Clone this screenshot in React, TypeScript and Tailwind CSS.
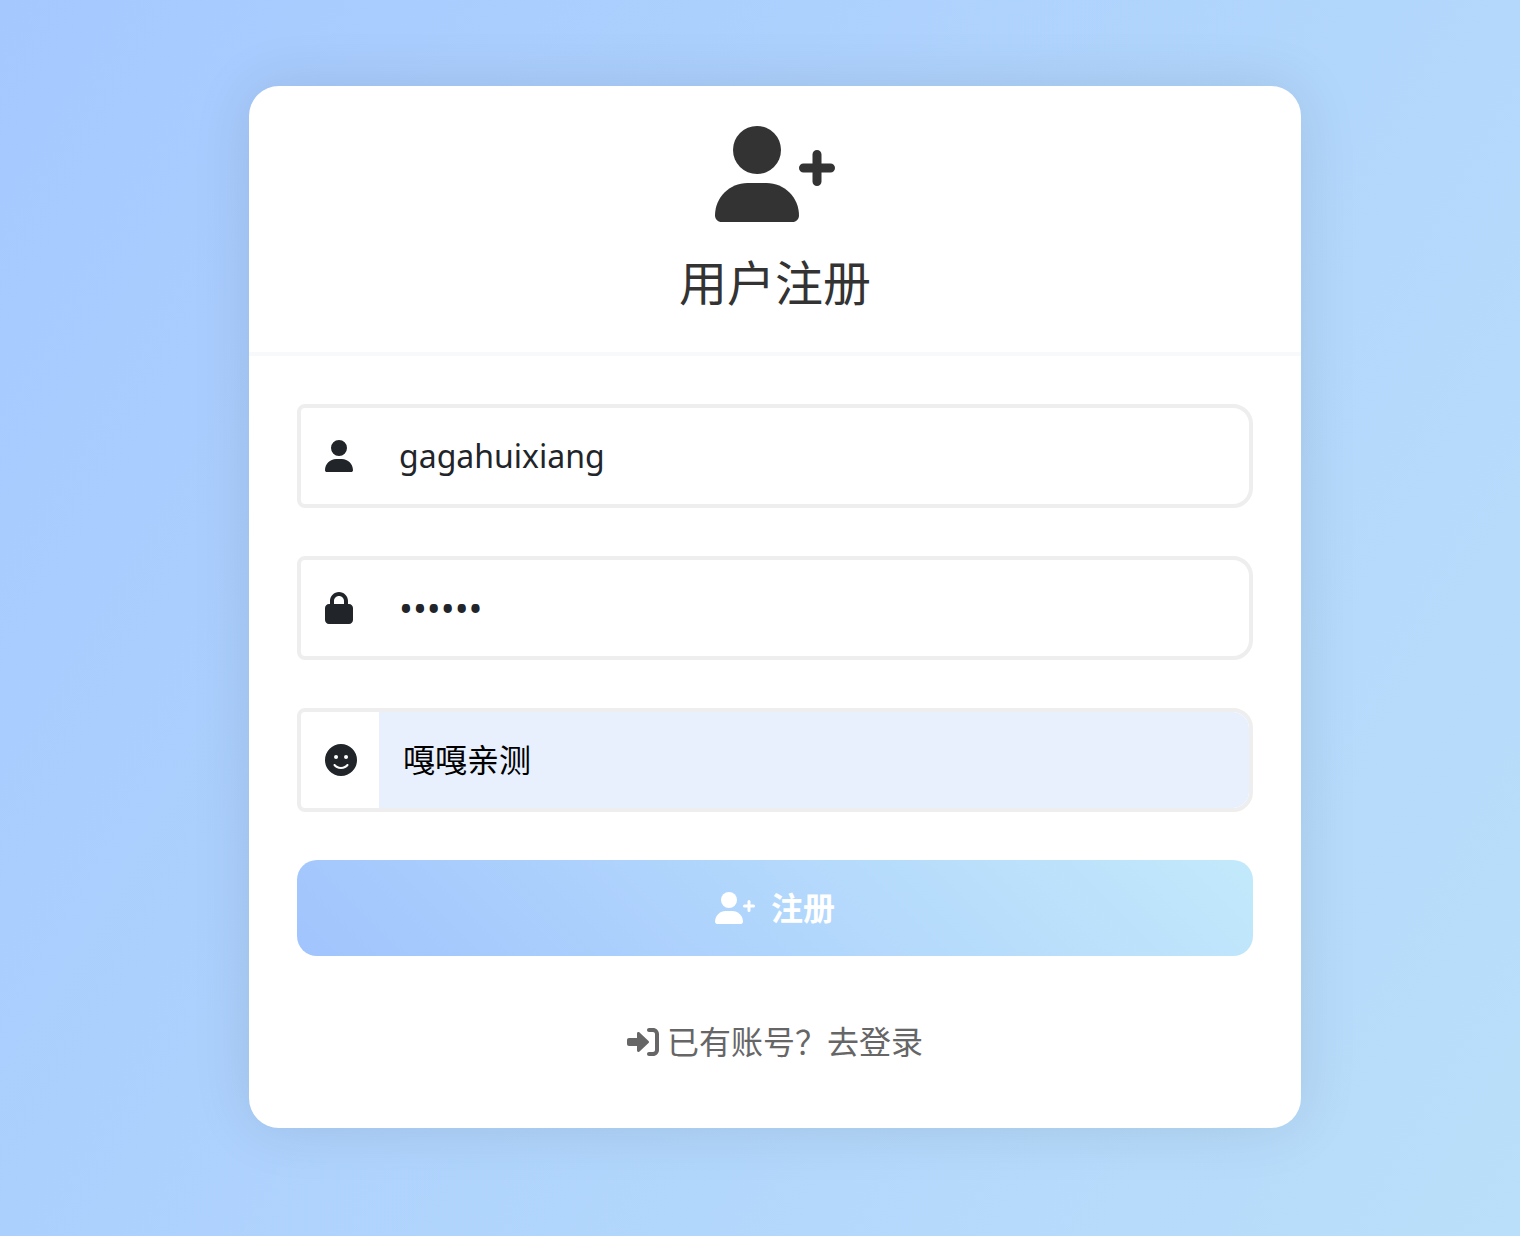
import { FaFaceSmile, FaLock, FaUser } from 'react-icons/fa6';
import clsx from 'clsx';
import type { ComponentType } from 'react';

type IconProps = { className?: string };

const UserPlusIcon = ({ className }: IconProps) => (
  <svg viewBox="0 0 640 512" fill="currentColor" className={className} aria-hidden="true">
    <circle cx="224" cy="128" r="128" />
    <path d="M274.7 304H173.3C77.6 304 0 381.6 0 477.3C0 496.5 15.5 512 34.7 512h378.7C432.5 512 448 496.5 448 477.3C448 381.6 370.4 304 274.7 304z" />
    <path
      d="M544 152v144M472 224h144"
      stroke="currentColor"
      strokeWidth="48"
      strokeLinecap="round"
    />
  </svg>
);

const LoginIcon = ({ className }: IconProps) => (
  <svg viewBox="0 0 512 512" fill="currentColor" className={className} aria-hidden="true">
    <path d="M344.7 238.5l-144.1-136C193.7 95.97 183.4 94.17 174.6 97.95C165.8 101.8 160.1 110.4 160.1 120V192H32.02C14.33 192 0 206.3 0 224v64c0 17.68 14.33 32 32.02 32h128.1v72c0 9.578 5.707 18.25 14.51 22.05c8.803 3.781 19.03 1.984 26-4.594l144.1-136C354.3 264.6 354.3 247.4 344.7 238.5z" />
    <path d="M416 32h-64c-17.67 0-32 14.33-32 32s14.33 32 32 32h64c17.67 0 32 14.33 32 32v256c0 17.67-14.33 32-32 32h-64c-17.67 0-32 14.33-32 32s14.33 32 32 32h64c53.02 0 96-42.98 96-96V128C512 74.98 469 32 416 32z" />
  </svg>
);

type FieldProps = {
  id: string;
  label: string;
  icon: ComponentType<IconProps>;
  iconClass?: string;
  type?: string;
  value: string;
  autofilled?: boolean;
};

const Field = ({
  id,
  label,
  icon: Icon,
  iconClass = 'w-7',
  type = 'text',
  value,
  autofilled,
}: FieldProps) => (
  <div className="flex h-26 overflow-hidden rounded-l-lg rounded-r-[20px] border-4 border-[#eeeeee] bg-white">
    <label htmlFor={id} aria-label={label} className="flex items-center pl-6 pr-[22px]">
      <Icon className={clsx('h-8 text-[#212529]', iconClass)} />
    </label>
    <input
      id={id}
      type={type}
      defaultValue={value}
      className={clsx(
        'min-w-0 flex-1 rounded-r-2xl px-6 outline-none',
        type === 'password' ? 'text-[37px]' : 'text-[32px]',
        autofilled ? 'bg-[#e8f0fe] text-black' : 'text-[#212529]'
      )}
    />
  </div>
);

const App = () => {
  return (
    <main className="min-h-screen bg-[linear-gradient(120deg,#a5c9ff,#badffa)] pt-[86px] pb-27 pl-[30px] font-['Noto_Sans','Noto_Sans_CJK_SC',sans-serif]">
      <div className="mx-auto max-w-[1052px] rounded-[30px] bg-white shadow-[0_0_60px_rgba(0,0,0,0.1)]">
        <header className="flex flex-col items-center gap-8 border-b-4 border-[#f8f9fa] py-10 text-[#333333]">
          <UserPlusIcon className="h-24 w-30" />
          <h1 className="text-5xl leading-[58px]">用户注册</h1>
        </header>
        <form className="flex flex-col gap-12 px-12 pt-12 pb-[62px]">
          <Field id="username" label="用户名" icon={FaUser} value="gagahuixiang" />
          <Field id="password" label="密码" icon={FaLock} type="password" value="123456" />
          <Field
            id="nickname"
            label="昵称"
            icon={FaFaceSmile}
            iconClass="w-8"
            value="嘎嘎亲测"
            autofilled
          />
          <button
            type="button"
            className="flex h-24 items-center justify-center gap-4 rounded-[20px] bg-[linear-gradient(45deg,#a1c4fd,#c2e9fb)] text-[32px] font-bold text-white"
          >
            <UserPlusIcon className="h-8 w-10" />
            注册
          </button>
          <a
            href="#login"
            className="mt-[14px] flex items-center justify-center gap-2 text-[32px] leading-12 text-[#666666]"
          >
            <LoginIcon className="size-8" />
            已有账号？去登录
          </a>
        </form>
      </div>
    </main>
  );
};

export default App;
